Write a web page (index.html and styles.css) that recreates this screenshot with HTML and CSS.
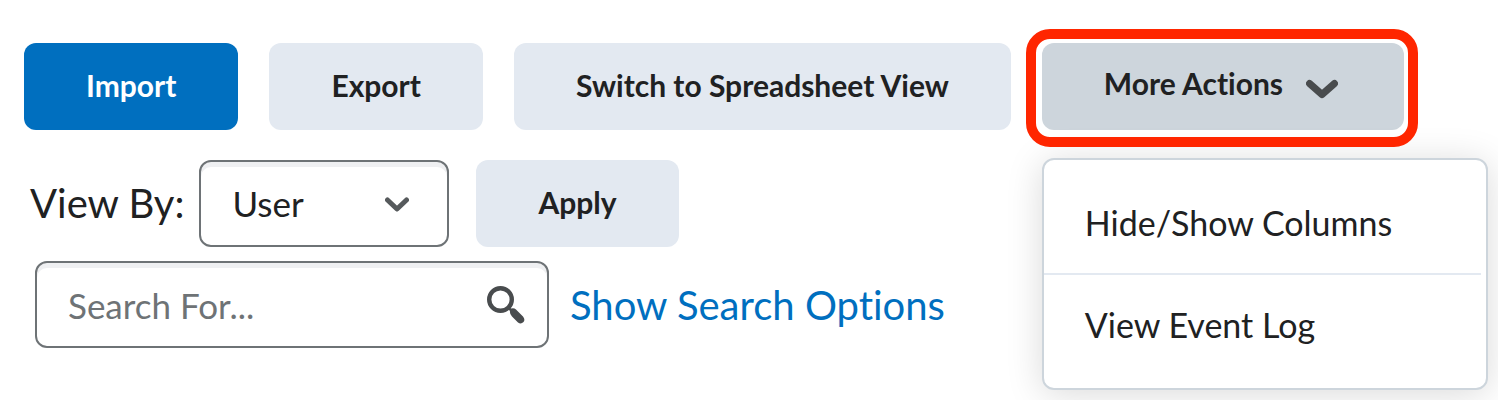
FILE: index.html
```
<!DOCTYPE html>
<html lang="en">
<head>
    <meta charset="utf-8">
    <title>Grades</title>
    <link rel="stylesheet" href="styles.css">
</head>
<body>
    <div class="toolbar">
        <button type="button" class="btn btn-primary">Import</button>
        <button type="button" class="btn">Export</button>
        <button type="button" class="btn">Switch to Spreadsheet View</button>
        <div class="more-actions">
            <button type="button" class="btn btn-open" aria-haspopup="true" aria-expanded="true">
                <span class="btn-label">More Actions</span>
                <svg class="chevron" width="32" height="20" viewBox="0 0 32 20" aria-hidden="true">
                    <path d="M3.5 4.5 L16 15.5 L28.5 4.5" fill="none" stroke="#494c4e" stroke-width="7" stroke-linecap="round" stroke-linejoin="round"/>
                </svg>
            </button>
            <div class="menu">
                <a class="menu-item" href="#columns">Hide/Show Columns</a>
                <a class="menu-item" href="#log">View Event Log</a>
            </div>
        </div>
    </div>

    <form class="view-by">
        <label for="view-by">View By:</label>
        <div class="select-box">
            <select id="view-by">
                <option>User</option>
                <option>Group</option>
            </select>
            <svg class="select-arrow" width="24" height="15" viewBox="0 0 24 15" aria-hidden="true">
                <path d="M2.5 3 L12 12 L21.5 3" fill="none" stroke="#565a5c" stroke-width="5" stroke-linecap="round" stroke-linejoin="round"/>
            </svg>
        </div>
        <button type="button" class="btn">Apply</button>
    </form>

    <form class="search">
        <div class="search-box">
            <input type="text" placeholder="Search For..." aria-label="Search For">
            <button type="button" class="search-button" aria-label="Search">
                <svg width="38" height="38" viewBox="0 0 38 38" aria-hidden="true">
                    <circle cx="13.5" cy="13.5" r="11.3" fill="none" stroke="#494c4e" stroke-width="4.4"/>
                    <path d="M20.5 22.5 L22.5 20.5 L24 22.5 Q27 21.5 29 23.5 L36 30.5 Q38.5 33.5 36.5 36 Q34 38.5 31 36.5 L25 30.5 Q22.5 28 23 25 Z" fill="#494c4e"/>
                </svg>
            </button>
        </div>
        <a class="search-options" href="#options">Show Search Options</a>
    </form>
</body>
</html>
```

FILE: styles.css
```
* {
    box-sizing: border-box;
}
body {
    min-height: 100vh;
    margin: 0;
    padding: 43px 24px 0;
    background-color: #fff;
    color: #202122;
    font-family: Lato, sans-serif;
    font-size: 40px;
    font-variant-ligatures: none;
}
a {
    text-decoration: none;
}
button,
input,
select {
    font-family: inherit;
    font-variant-ligatures: inherit;
}
.toolbar {
    display: flex;
    gap: 31px;
}
.btn {
    height: 87px;
    padding: 0 62px 4px;
    border: none;
    border-radius: 12px;
    background-color: #e3e9f1;
    color: #202122;
    font-size: 30px;
    font-weight: 700;
    white-space: nowrap;
    cursor: pointer;
}
.btn-primary {
    background-color: #006fbf;
    color: #fff;
}
.btn-open {
    display: flex;
    align-items: center;
    gap: 23px;
    padding-right: 66px;
    background-color: #cdd5dc;
}
.btn-label {
    padding-bottom: 4px;
}
.chevron {
    margin-top: 8px;
}
.more-actions {
    position: relative;
}
/* red ring around the open button */
.more-actions::after {
    content: "";
    position: absolute;
    inset: -14px -14px -17px -16px;
    border: 10px solid #ff2600;
    border-radius: 24px;
    pointer-events: none;
}
.menu {
    position: absolute;
    top: 115px;
    left: 0;
    width: 446px;
    padding: 13px 5px 13px 0;
    border: 2px solid #cdd5dc;
    border-radius: 12px;
    background-color: #fff;
    box-shadow: 0 4px 36px rgba(0, 0, 0, 0.15);
}
.menu-item {
    display: block;
    padding: 0 41px;
    color: #202122;
    font-size: 34px;
    line-height: 100px;
}
.menu-item + .menu-item {
    border-top: 2px solid #e3e9f1;
}
.view-by {
    display: flex;
    align-items: center;
    margin-top: 30px;
    padding-left: 6px;
}
.view-by label {
    padding-bottom: 2px;
}
.select-box {
    position: relative;
    margin: 0 27px 0 15px;
}
select,
.search-box {
    height: 87px;
    border: 2px solid #6e7376;
    border-radius: 12px;
    background-color: #fff;
    box-shadow: inset 0 5px 0 #eff0f2;
}
select {
    display: block;
    width: 250px;
    padding: 0 31px 2px;
    color: #202122;
    font-size: 35px;
    appearance: none;
}
.select-arrow {
    position: absolute;
    top: 37px;
    right: 40px;
    pointer-events: none;
}
.search {
    display: flex;
    align-items: center;
    gap: 21px;
    margin-top: 14px;
    padding-left: 11px;
}
.search-box {
    display: flex;
    align-items: center;
    width: 514px;
    padding: 0 22px 0 31px;
}
.search-box input {
    flex: 1;
    min-width: 0;
    padding: 0;
    border: none;
    outline: none;
    background: none;
    color: #202122;
    font-size: 35px;
}
.search-box input::placeholder {
    color: #6e7376;
    opacity: 1;
}
.search-button {
    display: flex;
    padding: 0;
    border: none;
    background: none;
    cursor: pointer;
}
.search-options {
    color: #006fbf;
}
```
